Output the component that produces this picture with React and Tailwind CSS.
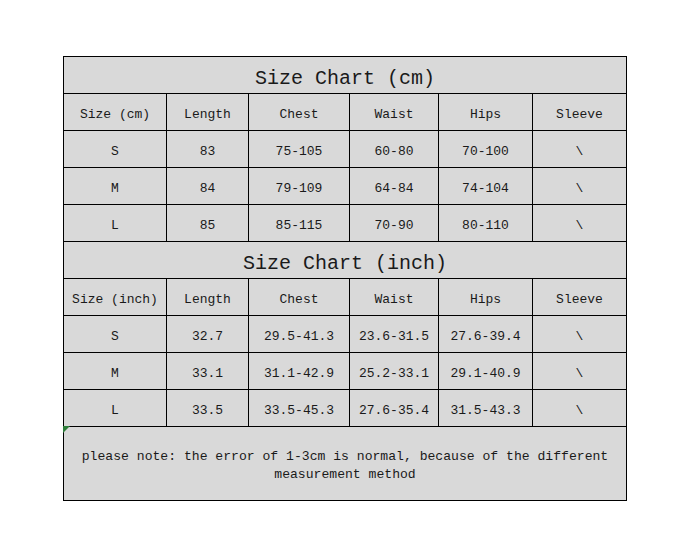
import React from "react";

const cols = "grid-cols-[103px_82px_101px_89px_94px_94px]";

const cmRows = [
  ["S", "83", "75-105", "60-80", "70-100", "\\"],
  ["M", "84", "79-109", "64-84", "74-104", "\\"],
  ["L", "85", "85-115", "70-90", "80-110", "\\"],
];

const inchRows = [
  ["S", "32.7", "29.5-41.3", "23.6-31.5", "27.6-39.4", "\\"],
  ["M", "33.1", "31.1-42.9", "25.2-33.1", "29.1-40.9", "\\"],
  ["L", "33.5", "33.5-45.3", "27.6-35.4", "31.5-43.3", "\\"],
];

const Title = ({ children }) => (
  <div className="h-[37px] pt-[7px] flex items-center justify-center border-r border-b border-black text-[20px] text-[#1a1a1a]">
    {children}
  </div>
);

const Row = ({ cells }) => (
  <div className={`grid ${cols}`}>
    {cells.map((c, i) => (
      <div
        key={i}
        className="h-[37px] pt-[5px] flex items-center justify-center border-r border-b border-black text-[13px] text-[#1a1a1a]"
      >
        {c}
      </div>
    ))}
  </div>
);

export default function App() {
  return (
    <div className="w-[674px] h-[533px] bg-white pt-[56px] pl-[63px] font-['Liberation_Mono',monospace]">
      <div className="w-[564px] bg-[#d9d9d9] border-l border-t border-black">
        <Title>Size Chart (cm)</Title>
        <Row cells={["Size (cm)", "Length", "Chest", "Waist", "Hips", "Sleeve"]} />
        {cmRows.map((r, i) => (
          <Row key={i} cells={r} />
        ))}
        <Title>Size Chart (inch)</Title>
        <Row cells={["Size (inch)", "Length", "Chest", "Waist", "Hips", "Sleeve"]} />
        {inchRows.map((r, i) => (
          <Row key={i} cells={r} />
        ))}
        {/* note */}
        <div className="relative h-[74px] pt-[5px] flex items-center justify-center border-r border-b border-black px-1">
          <span className="absolute -left-px -top-px w-0 h-0 border-t-[7px] border-r-[7px] border-t-[#2e7d3a] border-r-transparent" />
          <p className="text-center text-[13.1px] leading-[18px] text-[#1a1a1a]">
            please note: the error of 1-3cm is normal, because of the different measurement method
          </p>
        </div>
      </div>
    </div>
  );
}
